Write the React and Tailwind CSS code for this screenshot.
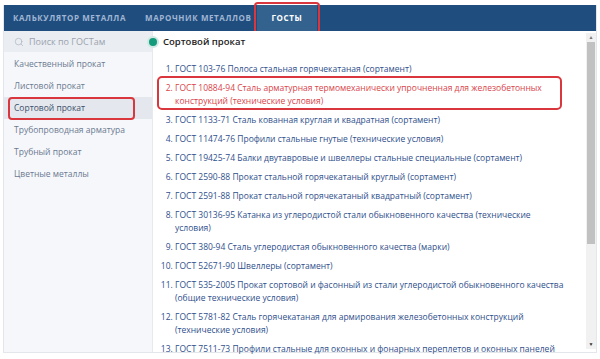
import { Search } from 'lucide-react';

const categories = [
    'Качественный прокат',
    'Листовой прокат',
    'Сортовой прокат',
    'Трубопроводная арматура',
    'Трубный прокат',
    'Цветные металлы',
];

const gosts = [
    'ГОСТ 103-76 Полоса стальная горячекатаная (сортамент)',
    'ГОСТ 10884-94 Сталь арматурная термомеханически упрочненная для железобетонных конструкций (технические условия)',
    'ГОСТ 1133-71 Сталь кованная круглая и квадратная (сортамент)',
    'ГОСТ 11474-76 Профили стальные гнутые (технические условия)',
    'ГОСТ 19425-74 Балки двутавровые и швеллеры стальные специальные (сортамент)',
    'ГОСТ 2590-88 Прокат стальной горячекатаный круглый (сортамент)',
    'ГОСТ 2591-88 Прокат стальной горячекатаный квадратный (сортамент)',
    'ГОСТ 30136-95 Катанка из углеродистой стали обыкновенного качества (технические условия)',
    'ГОСТ 380-94 Сталь углеродистая обыкновенного качества (марки)',
    'ГОСТ 52671-90 Швеллеры (сортамент)',
    'ГОСТ 535-2005 Прокат сортовой и фасонный из стали углеродистой обыкновенного качества (общие технические условия)',
    'ГОСТ 5781-82 Сталь горячекатаная для армирования железобетонных конструкций (технические условия)',
    'ГОСТ 7511-73 Профили стальные для оконных и фонарных переплетов и оконных панелей',
];

export default function App() {
    return (
        <div className="w-[600px] h-[359px] bg-white overflow-hidden pt-[5px] px-[3px] font-['Open_Sans','Liberation_Sans',sans-serif]">
            <div className="w-[594px] border border-t-0 border-[#e3e6ea]">
                {/* Tabs */}
                <div className="h-[26px] bg-[#1f4d7e] flex items-stretch pl-[9px] text-[8px] font-bold uppercase tracking-[0.6px]">
                    <div className="flex items-center text-[#9fb5d3] pr-[19px]">Калькулятор металла</div>
                    <div className="flex items-center text-[#9fb5d3] pr-[5px]">Марочник металлов</div>
                    <div className="relative flex items-center px-[15px] bg-[#33628f] text-white">
                        ГОСТЫ
                        <span className="absolute -left-[3px] -right-[3px] -top-[3px] -bottom-[3px] rounded-[4px] border-[2.5px] border-[#d9363e]" />
                    </div>
                </div>

                <div className="flex h-[321px]">
                    {/* Sidebar */}
                    <div className="w-[149px] shrink-0 bg-[#f6f7fa] border-r border-[#e6e9ee] flex flex-col">
                        <div className="h-[21px] bg-[#eaedf1] flex items-center pl-[10px] gap-[5px] text-[9px] text-[#9aa3b0]">
                            <Search size={10} strokeWidth={1.5} className="text-[#a7afba]" />
                            <span>Поиск по ГОСТам</span>
                        </div>
                        <div className="flex flex-col pt-[1px]">
                            {categories.map((c) => (
                                <div
                                    key={c}
                                    className={
                                        c === 'Сортовой прокат'
                                            ? 'relative h-[22px] flex items-center pl-[10px] text-[8.5px] text-[#3d4f6b] bg-[#e4e8ee]'
                                            : 'h-[22px] flex items-center pl-[10px] text-[8.5px] text-[#6b7a92]'
                                    }
                                >
                                    {c}
                                    {c === 'Сортовой прокат' && (
                                        <span className="absolute left-[4px] w-[127px] top-0 -bottom-[1px] rounded-[4px] border-[2.5px] border-[#d9363e]" />
                                    )}
                                </div>
                            ))}
                        </div>
                    </div>

                    {/* Content */}
                    <div className="relative flex-1 bg-white">
                        <div className="flex items-center h-[20px] mt-[1px] -ml-[6px] gap-[4px]">
                            <span className="w-[12px] h-[12px] rounded-full bg-[#cfe9e3] flex items-center justify-center">
                                <span className="w-[8px] h-[8px] rounded-full bg-[#139b7c]" />
                            </span>
                            <span className="text-[9.5px] text-[#222] font-semibold">Сортовой прокат</span>
                        </div>
                        <ol className="list-decimal pl-[22px] mt-[10px] w-[413px] text-[8.5px] leading-[13px]">
                            {gosts.map((g, i) => (
                                <li
                                    key={g}
                                    className={i === 1 ? 'relative mb-[6px] text-[#d9444b]' : 'mb-[6px] text-[#2f4f8c]'}
                                >
                                    {g}
                                    {i === 1 && (
                                        <span className="absolute -left-[18px] right-[4px] -top-[5px] -bottom-[3px] rounded-[5px] border-[2.5px] border-[#d9363e]" />
                                    )}
                                </li>
                            ))}
                        </ol>

                        {/* Scrollbar */}
                        <div className="absolute right-0 top-[2px] bottom-[3px] w-[10px] bg-[#f1f1f1] flex flex-col items-center">
                            <div className="h-[9px] flex items-center justify-center text-[5px] text-[#777]">▲</div>
                            <div className="w-[8px] h-[202px] bg-[#c1c1c1]" />
                            <div className="flex-1" />
                            <div className="h-[9px] flex items-center justify-center text-[5px] text-[#333]">▼</div>
                        </div>
                    </div>
                </div>
            </div>
        </div>
    );
}
